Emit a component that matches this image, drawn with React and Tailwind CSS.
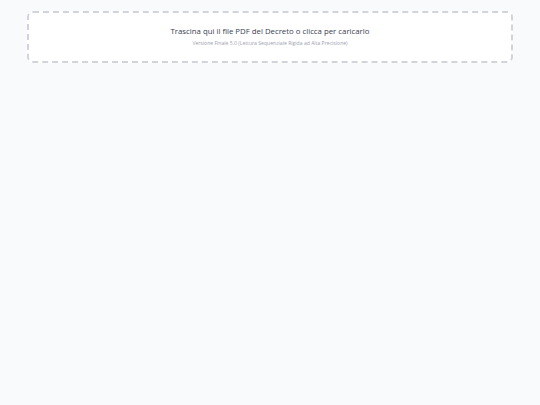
export default function App() {
  return (
    <div className="min-h-screen bg-[#f9fafb] px-[27px] pt-[11px]" style={{ fontFamily: '"Open Sans", sans-serif' }}>
      <div className="w-[486px] h-[52px] bg-white border-2 border-dashed border-[#d1d5db] rounded-[6px] flex flex-col items-center justify-center cursor-pointer">
        <div className="text-[7.8px] text-[#374151] leading-none">Trascina qui il file PDF del Decreto o clicca per caricarlo</div>
        <div className="text-[5.1px] text-[#9ca3af] leading-none mt-[6px]">Versione Finale 5.0 (Lettura Sequenziale Rigida ad Alta Precisione)</div>
      </div>
    </div>
  );
}
